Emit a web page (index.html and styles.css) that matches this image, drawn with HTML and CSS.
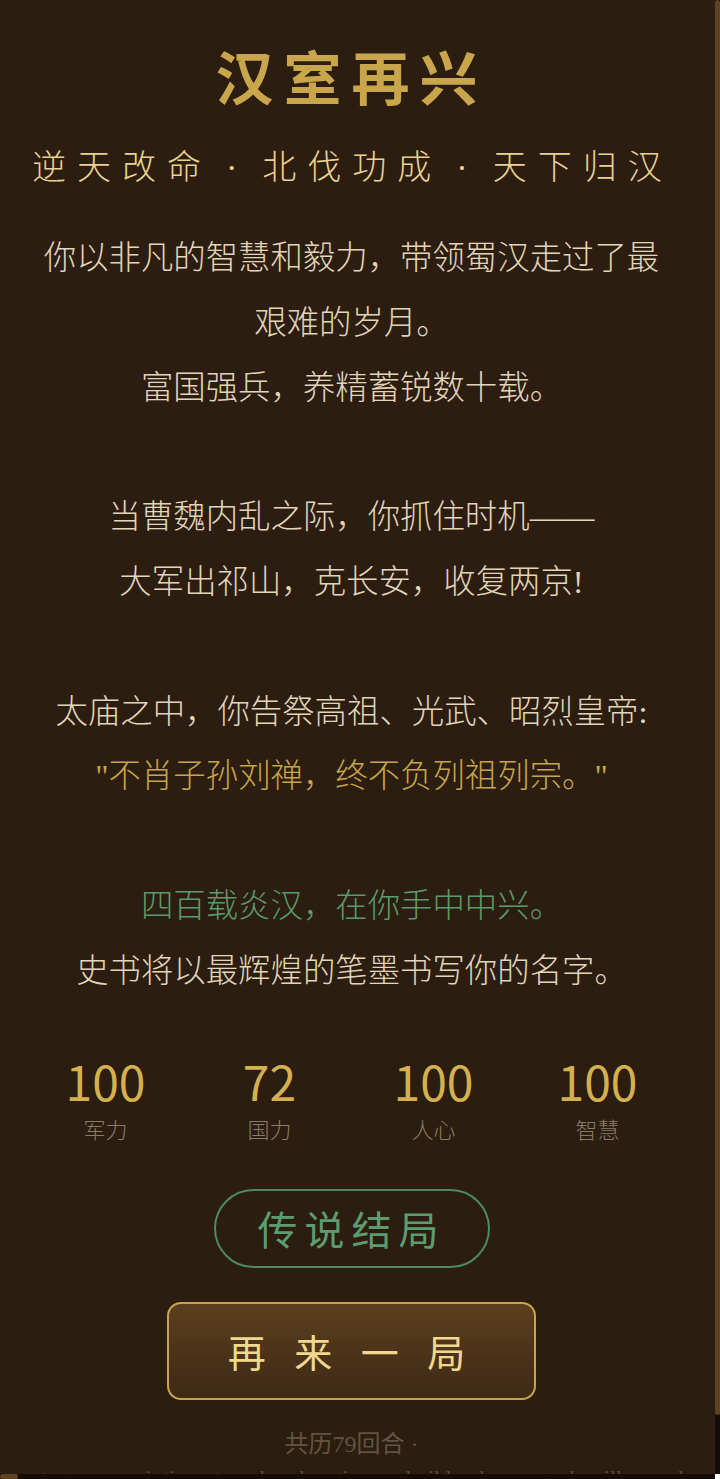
FILE: index.html
```html
<!DOCTYPE html>
<html lang="zh-CN">
<head>
  <meta charset="UTF-8" />
  <title>汉室再兴</title>
  <link rel="stylesheet" href="styles.css">
</head>
<body>
  <div class="app">
    <div class="viewport">
      <div class="ending">
        <h1 class="ending-title">汉室再兴</h1>
        <div class="ending-subtitle">逆天改命 · 北伐功成 · 天下归汉</div>

        <div class="ending-story">
          你以非凡的智慧和毅力，带领蜀汉走过了最艰难的岁月。<br/>
          富国强兵，养精蓄锐数十载。<br/>
          <br/>
          当曹魏内乱之际，你抓住时机——<br/>
          大军出祁山，克长安，收复两京!<br/>
          <br/>
          太庙之中，你告祭高祖、光武、昭烈皇帝:<br/>
          <span class="quote">"不肖子孙刘禅，终不负列祖列宗。"</span><br/>
          <br/>
          <span class="glory">四百载炎汉，在你手中中兴。</span><br/>
          史书将以最辉煌的笔墨书写你的名字。
        </div>

        <div class="stats">
          <div class="stat"><div class="stat-value">100</div><div class="stat-label">军力</div></div>
          <div class="stat"><div class="stat-value">72</div><div class="stat-label">国力</div></div>
          <div class="stat"><div class="stat-value">100</div><div class="stat-label">人心</div></div>
          <div class="stat"><div class="stat-value">100</div><div class="stat-label">智慧</div></div>
        </div>

        <div class="badge">传说结局</div>

        <button class="button restart">再 来 一 局</button>

        <div class="turns">共历79回合 ·</div>
        <div class="history">start · conscription · temple · donation · rebuild · chose · study · illness · harvest · conscription · temple · donation · campaign · chose · study · illness · harvest · conscription · temple · donation · campaign · victory</div>
      </div>
    </div>
    <div class="vbar"><div class="vbar-thumb"></div></div>
    <div class="hbar"><div class="hbar-thumb"></div></div>
    <div class="corner"></div>
  </div>
</body>
</html>
```

FILE: styles.css
```css
html, body {
  margin: 0;
  padding: 0;
  background-color: #2b1d0f;
}

body {
  font-family: 'Liberation Serif', 'Noto Sans CJK SC', serif;
  color: #e2d5ba;
}

/* page frame with its scrollbars */
.app {
  display: grid;
  grid-template-columns: 715px 5px;
  grid-template-rows: 1474px 5px;
  height: 100vh;
  overflow: hidden;
}

.viewport {
  overflow: hidden;
  background-color: #2b1d0f;
}

.vbar {
  background-color: #140d06;
}

.vbar-thumb {
  height: 1415px;
  background-color: #5e4224;
  border-radius: 3px;
}

.hbar {
  background-color: #140d06;
}

.hbar-thumb {
  width: 18px;
  height: 5px;
  background-color: #5e4224;
  border-radius: 3px;
}

.corner {
  background-color: #ffffff;
}

.ending {
  padding: 40px 44px 47px 32px;
  text-align: center;
}

.ending-title {
  margin: 0;
  font-family: 'Noto Sans CJK SC', sans-serif;
  font-size: 58px;
  font-weight: bold;
  line-height: 70px;
  letter-spacing: 10px;
  color: #c9a64c;
}

.ending-subtitle {
  margin-top: 33px;
  font-size: 34px;
  font-weight: 300;
  line-height: 50px;
  letter-spacing: 11px;
  word-spacing: -5.5px;
  white-space: nowrap;
  color: #ead290;
}

.ending-story {
  margin-top: 33px;
  font-size: 32.4px;
  font-weight: 300;
  line-height: 64.8px;
}

.quote {
  color: #c9a54a;
}

.glory {
  color: #5c9a6d;
}

.stats {
  display: grid;
  grid-template-columns: repeat(4, 1fr);
  margin: 48px -8.5px 0;
}

.stat-value {
  font-family: 'Noto Sans CJK SC', sans-serif;
  font-size: 48px;
  line-height: 56px;
  color: #d4b04f;
}

.stat-label {
  margin-top: 8px;
  font-size: 22px;
  font-weight: 300;
  line-height: 30px;
  color: #8a7c66;
}

.badge {
  display: flex;
  align-items: center;
  justify-content: center;
  box-sizing: border-box;
  width: 276px;
  height: 79px;
  margin: 43px auto 0;
  border: 2px solid #4e8a61;
  border-radius: 40px;
  font-family: 'Noto Sans CJK SC', sans-serif;
  font-size: 40px;
  letter-spacing: 7px;
  color: #5c9c6f;
}

.button {
  font-family: 'Noto Sans CJK SC', sans-serif;
  cursor: pointer;
}

.restart {
  display: block;
  box-sizing: border-box;
  width: 369px;
  height: 98px;
  margin: 34px auto 0;
  padding: 0;
  border: 2px solid #c9a54a;
  border-radius: 14px;
  background: linear-gradient(to bottom, #5b3e1f, #3e2a15);
  font-size: 38px;
  letter-spacing: 10px;
  color: #f0d890;
}

.turns {
  margin-top: 29px;
  font-size: 24px;
  line-height: 30px;
  color: #62543f;
}

.history {
  margin-top: 4px;
  white-space: nowrap;
  text-align: left;
  font-size: 22px;
  line-height: 30px;
  color: #5a4c39;
}
```
